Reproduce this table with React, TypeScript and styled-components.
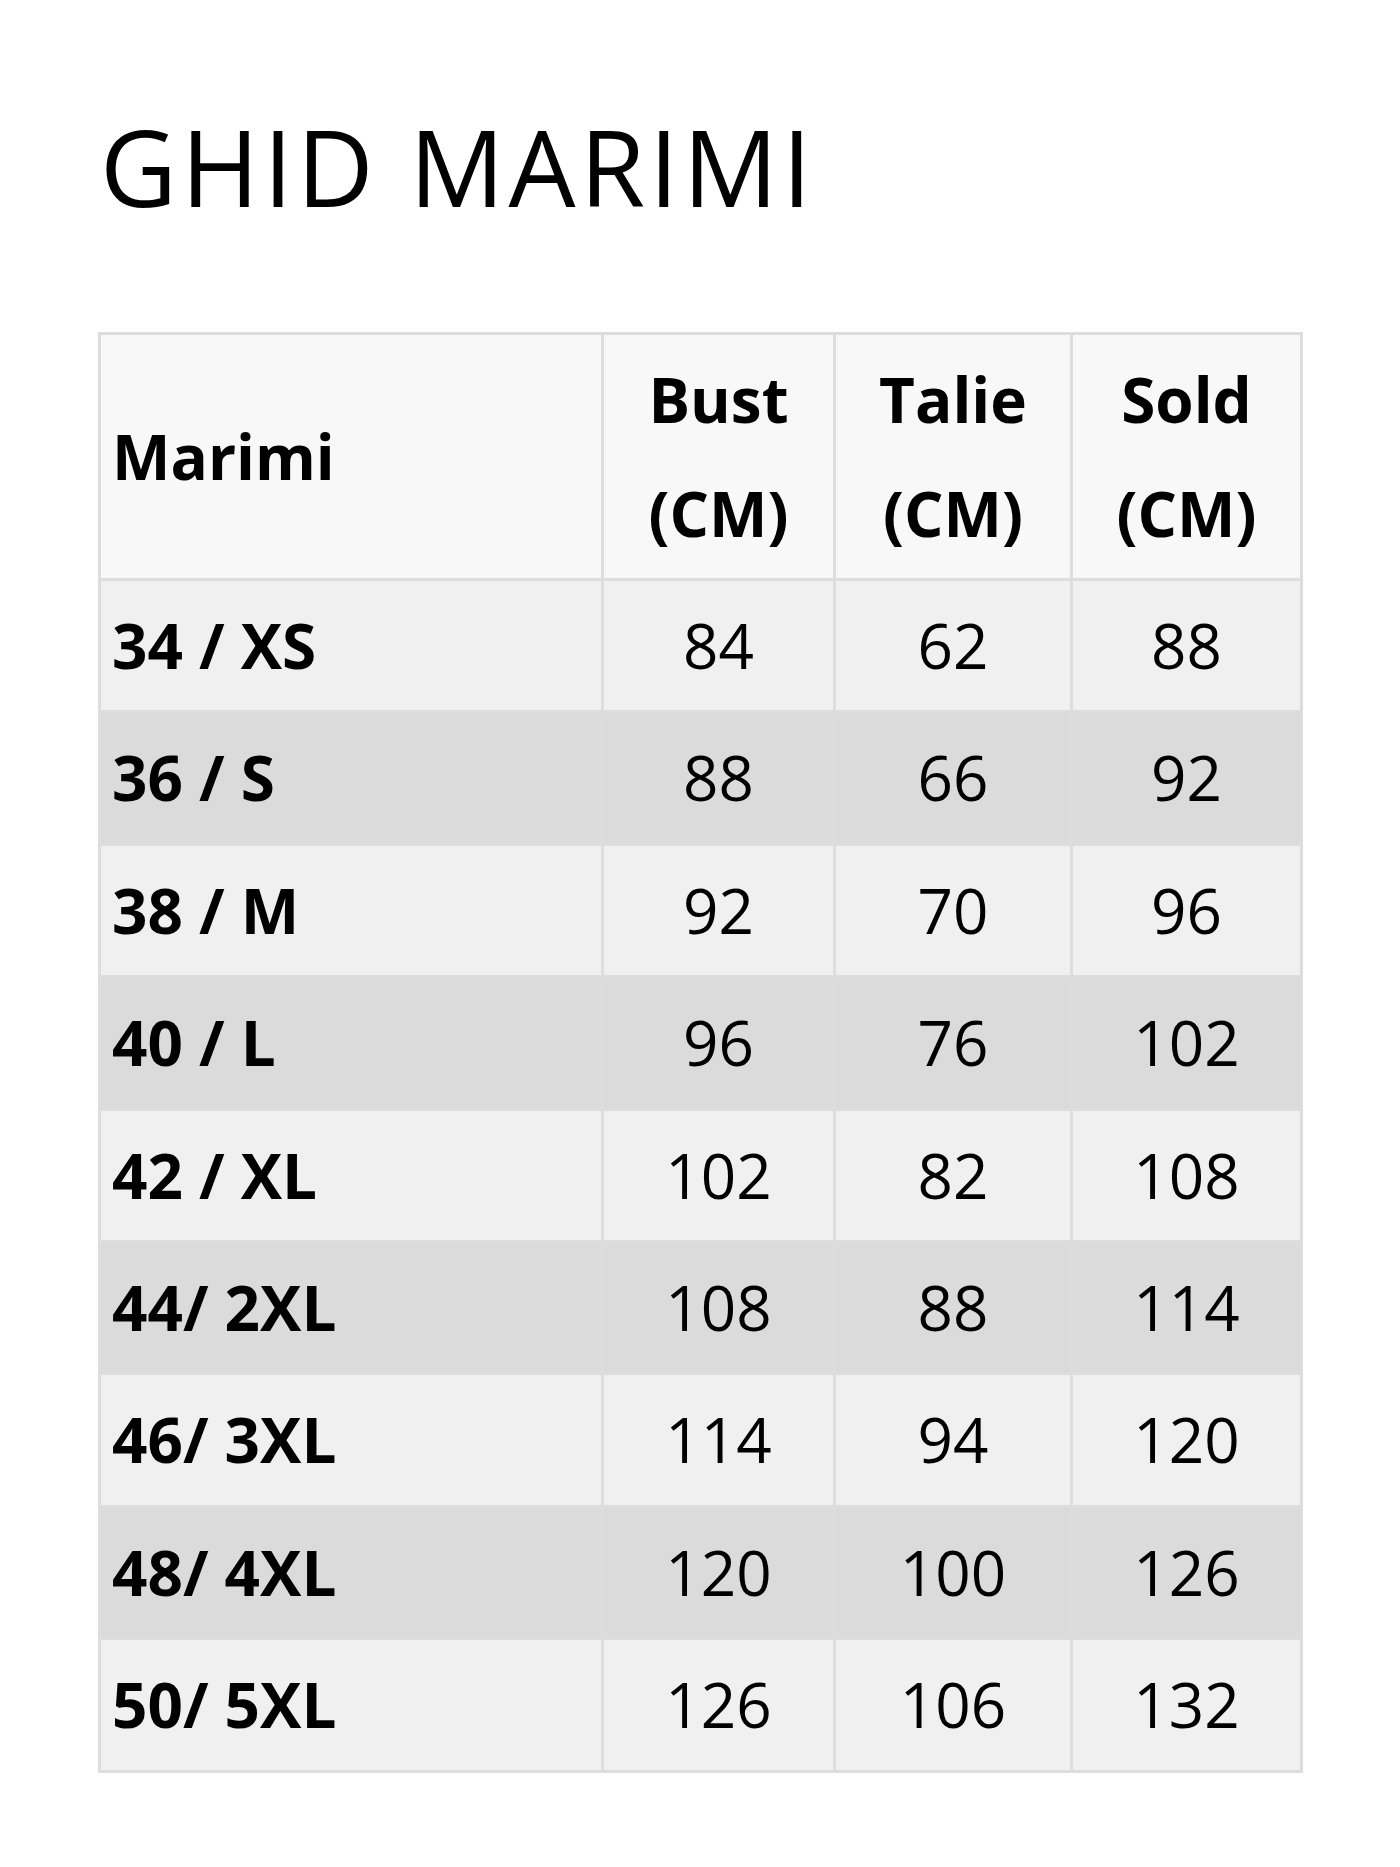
import styled, { createGlobalStyle } from "styled-components";

const GlobalStyle = createGlobalStyle`
  html, body {
    margin: 0;
    padding: 0;
    background: #ffffff;
  }
  body {
    font-family: "Open Sans", "DejaVu Sans", sans-serif;
    color: #000000;
  }
`;

const Page = styled.div`
  min-height: 1867px;
  padding: 103px 98px 0 98px;
  box-sizing: border-box;
`;

const Title = styled.h1`
  margin: 0 0 102px 2px;
  font-size: 106px;
  font-weight: 400;
  line-height: 1.2;
  letter-spacing: 4px;
`;

const SizeTable = styled.table`
  width: 1202px;
  border-collapse: collapse;
  table-layout: fixed;
  border: 3px solid #dddddd;
  font-size: 62px;
  line-height: 113.4px;
`;

const HeadCell = styled.th<{ $left?: boolean }>`
  padding: 8px 12px 8px ${(p) => (p.$left ? "11px" : "12px")};
  border: 3px solid #dddddd;
  background: #f8f8f8;
  font-weight: 700;
  text-align: ${(p) => (p.$left ? "left" : "center")};
  vertical-align: middle;
`;

const Row = styled.tr<{ $dark: boolean }>`
  background: ${(p) => (p.$dark ? "#dbdbdb" : "#f0f0f0")};
`;

const Cell = styled.td<{ $bold?: boolean }>`
  padding: 8px 12px 8px ${(p) => (p.$bold ? "11px" : "12px")};
  border: 3px solid #dddddd;
  font-weight: ${(p) => (p.$bold ? 700 : 400)};
  text-align: ${(p) => (p.$bold ? "left" : "center")};
  white-space: nowrap;
`;

const sizes = [
  { label: "34 / XS", bust: 84, talie: 62, sold: 88 },
  { label: "36 / S", bust: 88, talie: 66, sold: 92 },
  { label: "38 / M", bust: 92, talie: 70, sold: 96 },
  { label: "40 / L", bust: 96, talie: 76, sold: 102 },
  { label: "42 / XL", bust: 102, talie: 82, sold: 108 },
  { label: "44/ 2XL", bust: 108, talie: 88, sold: 114 },
  { label: "46/ 3XL", bust: 114, talie: 94, sold: 120 },
  { label: "48/ 4XL", bust: 120, talie: 100, sold: 126 },
  { label: "50/ 5XL", bust: 126, talie: 106, sold: 132 },
];

export default function App() {
  return (
    <Page>
      <GlobalStyle />
      <Title>GHID MARIMI</Title>
      <SizeTable>
        <colgroup>
          <col style={{ width: 503 }} />
          <col style={{ width: 232 }} />
          <col style={{ width: 237 }} />
          <col style={{ width: 230 }} />
        </colgroup>
        <thead>
          <tr>
            <HeadCell $left>Marimi</HeadCell>
            <HeadCell>Bust<br />(CM)</HeadCell>
            <HeadCell>Talie<br />(CM)</HeadCell>
            <HeadCell>Sold<br />(CM)</HeadCell>
          </tr>
        </thead>
        <tbody>
          {sizes.map((s, i) => (
            <Row key={s.label} $dark={i % 2 === 1}>
              <Cell $bold>{s.label}</Cell>
              <Cell>{s.bust}</Cell>
              <Cell>{s.talie}</Cell>
              <Cell>{s.sold}</Cell>
            </Row>
          ))}
        </tbody>
      </SizeTable>
    </Page>
  );
}
